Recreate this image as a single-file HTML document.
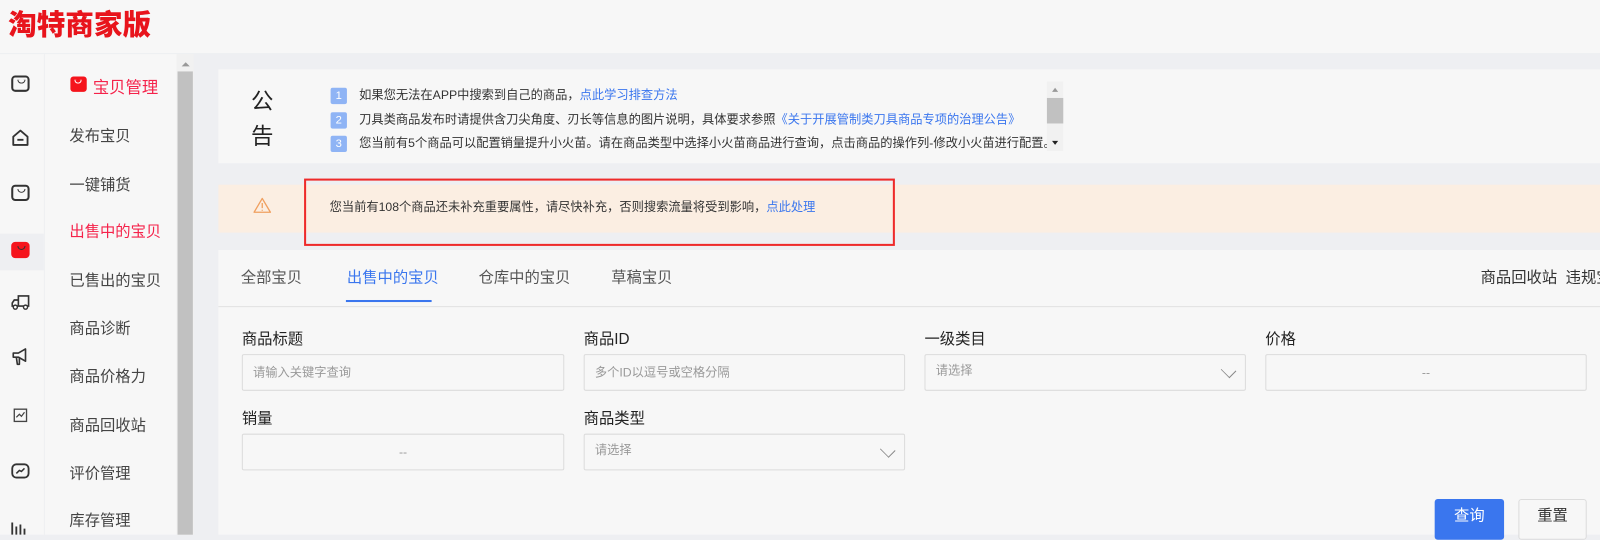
<!DOCTYPE html>
<html><head><meta charset="utf-8">
<style>
*{margin:0;padding:0;box-sizing:border-box}
body{width:1600px;height:524px;overflow:hidden;background:#eeeff2;font-family:"Liberation Sans","Noto Sans CJK SC",sans-serif;position:relative;color:#333}
#w{position:absolute;left:0;top:0;width:1568px;height:514px;transform:scale(1.0204);transform-origin:0 0}
.a{position:absolute}
.ic{position:absolute;left:11px;width:18px;height:16px;border:2px solid #333;border-radius:4px}
.ic:after{content:"";position:absolute;left:4px;top:2px;width:6px;height:3px;border:1.5px solid #333;border-top:none;border-radius:0 0 4px 4px}
.mi{position:absolute;left:68px;font-size:15px;color:#444}
.lab{position:absolute;font-size:15px;color:#222}
.inp{position:absolute;height:36px;border:1px solid #dcdcdc;border-radius:2px;background:#f7f7f7;font-size:12px;color:#999;padding-left:10px;line-height:34px}
.chev{position:absolute;right:10px;top:9px;width:12px;height:12px;border-right:1.5px solid #888;border-bottom:1.5px solid #888;transform:rotate(45deg) scale(1,0.8);}
.num{display:inline-block;width:16px;height:16px;background:#8fb4f5;color:#fff;font-size:11px;text-align:center;line-height:16px;border-radius:2px;margin-right:12px}
.nl{position:absolute;left:324px;font-size:12px;color:#333}
.nl a{color:#3a76ee}
</style></head><body><div id="w">
<div class="a" style="left:0;top:0;width:1568px;height:52px;background:#f7f7f7"></div>
<div class="a" style="left:8px;top:3px;font-size:28px;font-weight:900;color:#e8141c;font-family:'Noto Sans CJK SC',sans-serif">淘特商家版</div>
<div class="a" style="left:0;top:53px;width:43px;height:471px;background:#f7f7f7"></div>
<div class="a" style="left:0;top:229px;width:43px;height:36px;background:#eeeff2"></div>
<div class="ic" style="top:74px"></div>
<div class="a" style="left:11px;top:126px;width:18px;height:18px"><svg width="18" height="18" viewBox="0 0 18 18"><path d="M2 8 L9 2 L16 8 V16 H2 Z" fill="none" stroke="#333" stroke-width="1.8" stroke-linejoin="round"/><path d="M6 11 H12" stroke="#333" stroke-width="1.8"/></svg></div>
<div class="ic" style="top:181px"></div>
<div class="ic" style="top:237px;background:#f5141c;border-color:#f5141c"></div>
<div class="a" style="left:10px;top:288px"><svg width="20" height="16" viewBox="0 0 20 16"><path d="M8 2 H18 V12 H8 Z M8 6 H4 L2 9 V12 H8" fill="none" stroke="#333" stroke-width="1.6"/><circle cx="5" cy="13" r="2" fill="#fff" stroke="#333" stroke-width="1.4"/><circle cx="15" cy="13" r="2" fill="#fff" stroke="#333" stroke-width="1.4"/></svg></div>
<div class="a" style="left:10px;top:340px"><svg width="20" height="20" viewBox="0 0 20 20"><path d="M3 6 H8 L15 2 V14 L8 10 H3 Z M6 10 L7 17 H9 L9 10" fill="none" stroke="#333" stroke-width="1.6" stroke-linejoin="round"/></svg></div>
<div class="a" style="left:13px;top:400px"><svg width="14" height="14" viewBox="0 0 14 14"><rect x="1" y="1" width="12" height="12" fill="none" stroke="#444" stroke-width="1.3"/><path d="M3 9 L6 6 L8 8 L11 4" fill="none" stroke="#444" stroke-width="1.2"/></svg></div>
<div class="a" style="left:10px;top:452px"><svg width="20" height="18" viewBox="0 0 20 18"><rect x="2" y="3" width="16" height="13" rx="4" fill="none" stroke="#333" stroke-width="1.8"/><path d="M6 12 L9 9 L11 10 L14 7" fill="none" stroke="#333" stroke-width="1.5"/></svg></div>
<div class="a" style="left:10px;top:510px"><svg width="20" height="14" viewBox="0 0 20 14"><path d="M2 14 V2 M6 14 V6 M10 14 V4 M14 14 V8" stroke="#333" stroke-width="1.8"/></svg></div>
<div class="a" style="left:44px;top:53px;width:129px;height:471px;background:#f7f7f7"></div>
<div class="a" style="left:69px;top:75px;width:16px;height:15px;background:#f5141c;border-radius:3px"></div>
<div class="a" style="left:73px;top:78px;width:7px;height:4px;border:1.5px solid #fff;border-top:none;border-radius:0 0 4px 4px"></div>
<div class="a" style="left:91px;top:72px;font-size:16px;color:#f5224a">宝贝管理</div>
<div class="mi" style="top:122px">发布宝贝</div>
<div class="mi" style="top:170px">一键铺货</div>
<div class="mi" style="top:216px;color:#f5224a">出售中的宝贝</div>
<div class="mi" style="top:264px">已售出的宝贝</div>
<div class="mi" style="top:311px">商品诊断</div>
<div class="mi" style="top:358px">商品价格力</div>
<div class="mi" style="top:406px">商品回收站</div>
<div class="mi" style="top:453px">评价管理</div>
<div class="mi" style="top:499px">库存管理</div>
<div class="a" style="left:173px;top:53px;width:17px;height:471px;background:#f1f1f1"></div>
<div class="a" style="left:178px;top:61px;width:0;height:0;border-left:4px solid transparent;border-right:4px solid transparent;border-bottom:4px solid #999"></div>
<div class="a" style="left:174px;top:70px;width:15px;height:454px;background:#c1c1c1"></div>
<div class="a" style="left:214px;top:68px;width:1354px;height:92px;background:#f7f7f7"></div>
<div class="a" style="left:246px;top:83px;font-size:22px;color:#222;line-height:34px">公<br>告</div>
<div class="nl" style="top:84px"><span class="num">1</span>如果您无法在APP中搜索到自己的商品，<a>点此学习排查方法</a></div>
<div class="nl" style="top:108px"><span class="num">2</span>刀具类商品发布时请提供含刀尖角度、刃长等信息的图片说明，具体要求参照<a>《关于开展管制类刀具商品专项的治理公告》</a></div>
<div class="nl" style="top:131px"><span class="num">3</span>您当前有5个商品可以配置销量提升小火苗。请在商品类型中选择小火苗商品进行查询，点击商品的操作列-修改小火苗进行配置。</div>
<div class="a" style="left:1026px;top:80px;width:16px;height:68px;background:#f1f1f1"></div>
<div class="a" style="left:1026px;top:96px;width:16px;height:25px;background:#c1c1c1"></div>
<div class="a" style="left:1031px;top:86px;border-left:3px solid transparent;border-right:3px solid transparent;border-bottom:4px solid #999"></div>
<div class="a" style="left:1031px;top:138px;border-left:3px solid transparent;border-right:3px solid transparent;border-top:4px solid #222"></div>
<div class="a" style="left:214px;top:181px;width:1354px;height:47px;background:#fbeee2"></div>
<div class="a" style="left:248px;top:193px"><svg width="18" height="16" viewBox="0 0 18 16"><path d="M9 1.5 L17 15 H1 Z" fill="none" stroke="#f0a060" stroke-width="1.3" stroke-linejoin="round"/><path d="M9 6 V11 M9 12.5 V13.5" stroke="#f0a060" stroke-width="1.3"/></svg></div>
<div class="a" style="left:323px;top:194px;font-size:12px;color:#333">您当前有108个商品还未补充重要属性，请尽快补充，否则搜索流量将受到影响，<span style="color:#3a76ee">点此处理</span></div>
<div class="a" style="left:298px;top:175px;width:579px;height:66px;border:2px solid #ee2a2a"></div>
<div class="a" style="left:214px;top:245px;width:1354px;height:279px;background:#f7f7f7"></div>
<div class="a" style="left:214px;top:300px;width:1354px;height:1px;background:#e2e2e2"></div>
<div class="a" style="left:236px;top:261px;font-size:15px;color:#555">全部宝贝</div>
<div class="a" style="left:340px;top:261px;font-size:15px;color:#3a76ee">出售中的宝贝</div>
<div class="a" style="left:339px;top:294px;width:84px;height:2px;background:#3a76ee"></div>
<div class="a" style="left:469px;top:261px;font-size:15px;color:#555">仓库中的宝贝</div>
<div class="a" style="left:599px;top:261px;font-size:15px;color:#555">草稿宝贝</div>
<div class="a" style="left:1451px;top:261px;font-size:15px;color:#333;white-space:nowrap">商品回收站 &nbsp;违规宝</div>
<div class="lab" style="left:237px;top:321px">商品标题</div>
<div class="lab" style="left:572px;top:321px">商品ID</div>
<div class="lab" style="left:906px;top:321px">一级类目</div>
<div class="lab" style="left:1240px;top:321px">价格</div>
<div class="inp" style="left:237px;top:347px;width:316px">请输入关键字查询</div>
<div class="inp" style="left:572px;top:347px;width:315px">多个ID以逗号或空格分隔</div>
<div class="inp" style="left:906px;top:347px;width:315px;line-height:30px">请选择<span class="chev"></span></div>
<div class="inp" style="left:1240px;top:347px;width:315px;text-align:center;padding:0">--</div>
<div class="lab" style="left:237px;top:399px">销量</div>
<div class="lab" style="left:572px;top:399px">商品类型</div>
<div class="inp" style="left:237px;top:425px;width:316px;text-align:center;padding:0">--</div>
<div class="inp" style="left:572px;top:425px;width:315px;line-height:30px">请选择<span class="chev"></span></div>
<div class="a" style="left:1406px;top:489px;width:68px;height:40px;background:#3a76ee;border-radius:3px;color:#fff;font-size:15px;text-align:center;line-height:34px">查询</div>
<div class="a" style="left:1488px;top:489px;width:67px;height:40px;background:#f7f7f7;border:1px solid #dcdcdc;border-radius:3px;color:#333;font-size:15px;text-align:center;line-height:32px">重置</div>
</div></body></html>
